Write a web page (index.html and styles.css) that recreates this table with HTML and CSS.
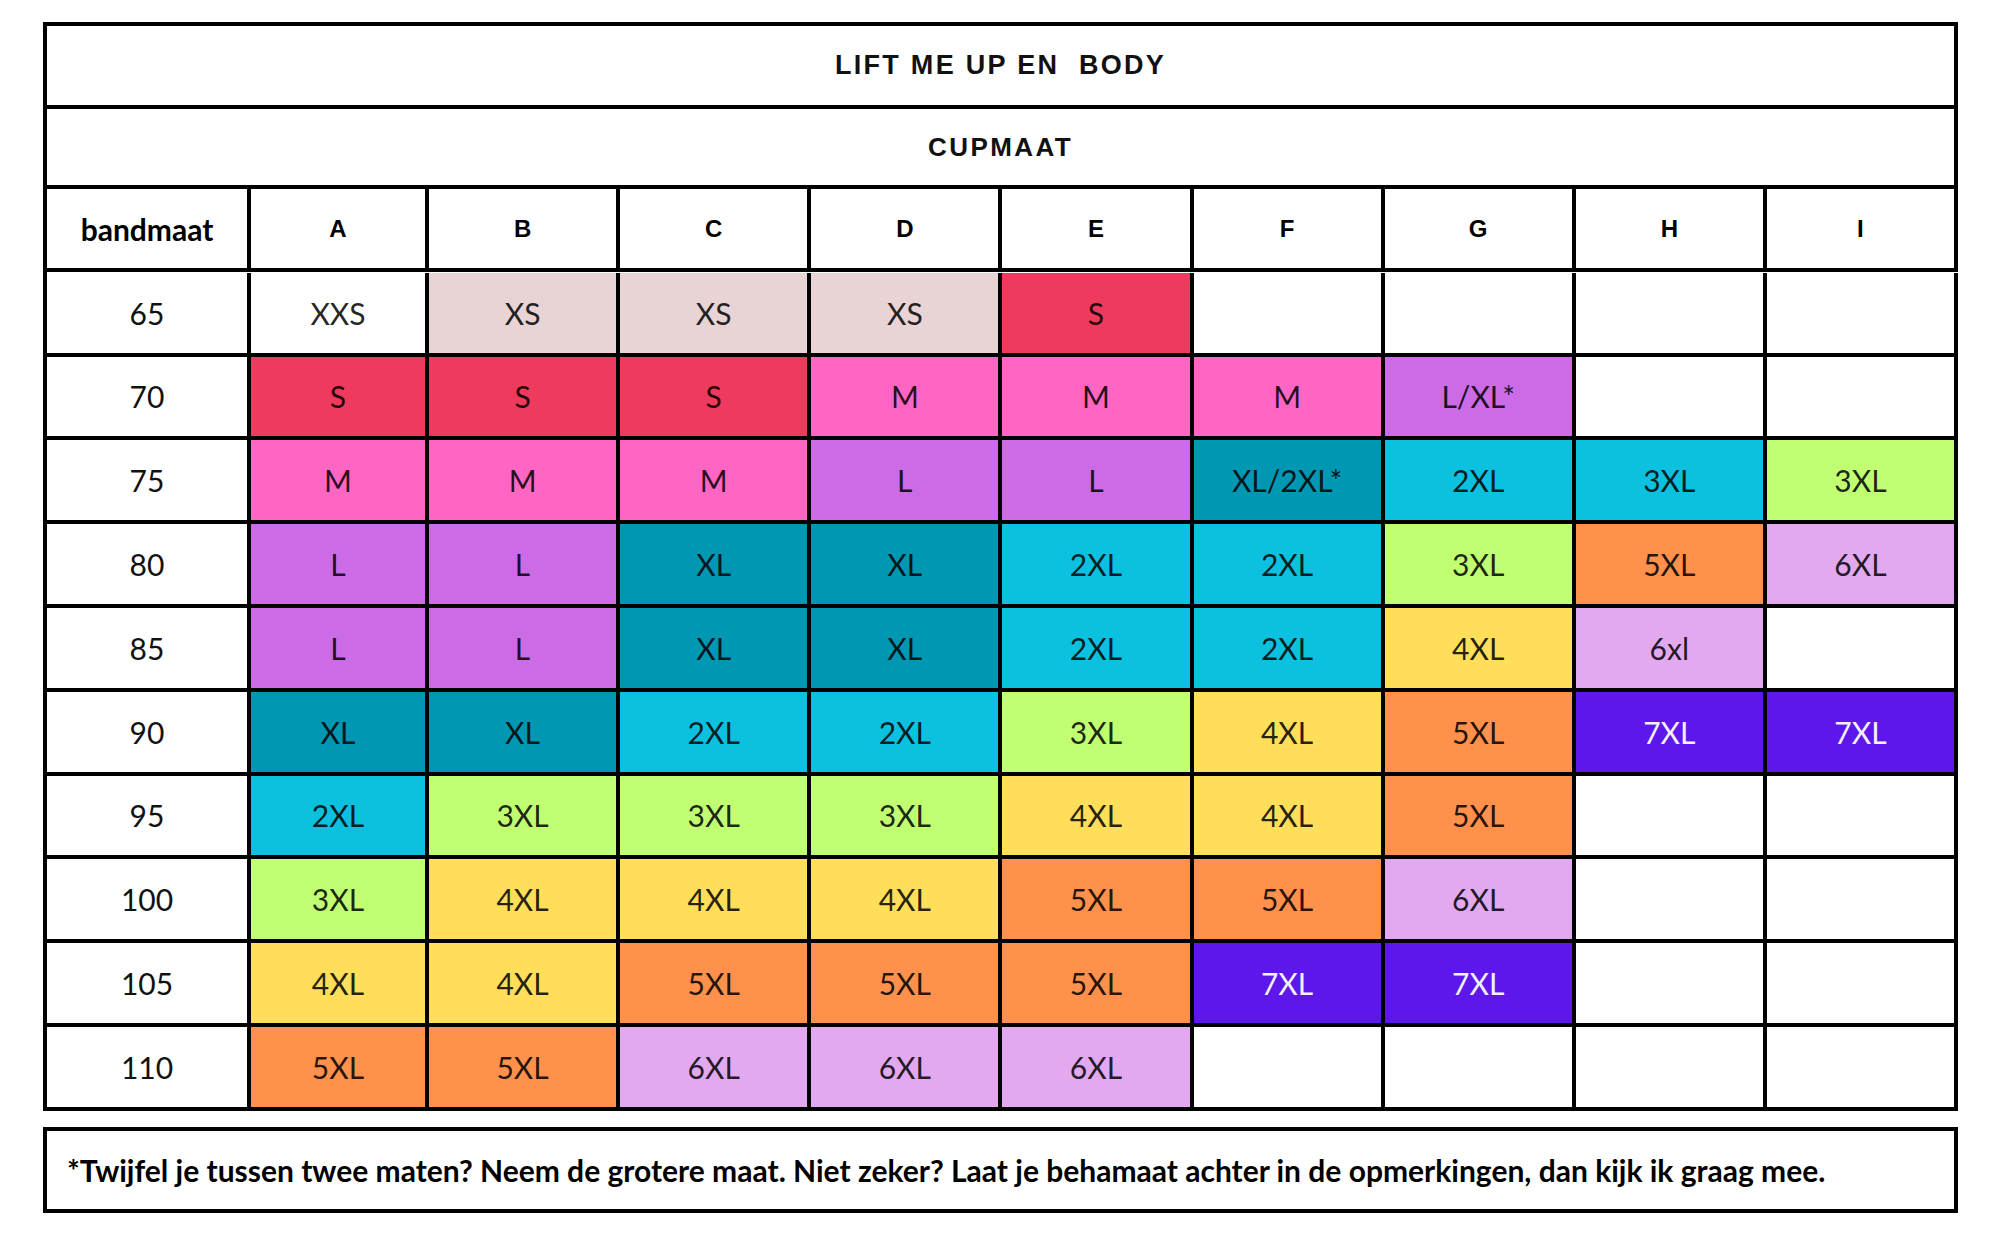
FILE: index.html
```html
<!DOCTYPE html>
<html lang="nl">
<head>
<meta charset="utf-8">
<title>Lift me up en body - maattabel</title>
<link rel="stylesheet" href="styles.css">
</head>
<body>
<div class="page">
  <div class="chart">
    <div class="banner title">LIFT ME UP EN&nbsp; BODY</div>
    <div class="banner sub">CUPMAAT</div>
    <div class="grid">
      <div class="cell head band">bandmaat</div>
      <div class="cell head">A</div><div class="cell head">B</div><div class="cell head">C</div><div class="cell head">D</div><div class="cell head">E</div><div class="cell head">F</div><div class="cell head">G</div><div class="cell head">H</div><div class="cell head">I</div>

      <div class="cell num">65</div>
      <div class="cell">XXS</div><div class="cell xs">XS</div><div class="cell xs">XS</div><div class="cell xs">XS</div><div class="cell s">S</div><div class="cell"></div><div class="cell"></div><div class="cell"></div><div class="cell"></div>

      <div class="cell num">70</div>
      <div class="cell s">S</div><div class="cell s">S</div><div class="cell s">S</div><div class="cell m">M</div><div class="cell m">M</div><div class="cell m">M</div><div class="cell l">L/XL*</div><div class="cell"></div><div class="cell"></div>

      <div class="cell num">75</div>
      <div class="cell m">M</div><div class="cell m">M</div><div class="cell m">M</div><div class="cell l">L</div><div class="cell l">L</div><div class="cell xl">XL/2XL*</div><div class="cell x2">2XL</div><div class="cell x2">3XL</div><div class="cell x3">3XL</div>

      <div class="cell num">80</div>
      <div class="cell l">L</div><div class="cell l">L</div><div class="cell xl">XL</div><div class="cell xl">XL</div><div class="cell x2">2XL</div><div class="cell x2">2XL</div><div class="cell x3">3XL</div><div class="cell x5">5XL</div><div class="cell x6">6XL</div>

      <div class="cell num">85</div>
      <div class="cell l">L</div><div class="cell l">L</div><div class="cell xl">XL</div><div class="cell xl">XL</div><div class="cell x2">2XL</div><div class="cell x2">2XL</div><div class="cell x4">4XL</div><div class="cell x6">6xl</div><div class="cell"></div>

      <div class="cell num">90</div>
      <div class="cell xl">XL</div><div class="cell xl">XL</div><div class="cell x2">2XL</div><div class="cell x2">2XL</div><div class="cell x3">3XL</div><div class="cell x4">4XL</div><div class="cell x5">5XL</div><div class="cell x7">7XL</div><div class="cell x7">7XL</div>

      <div class="cell num">95</div>
      <div class="cell x2">2XL</div><div class="cell x3">3XL</div><div class="cell x3">3XL</div><div class="cell x3">3XL</div><div class="cell x4">4XL</div><div class="cell x4">4XL</div><div class="cell x5">5XL</div><div class="cell"></div><div class="cell"></div>

      <div class="cell num">100</div>
      <div class="cell x3">3XL</div><div class="cell x4">4XL</div><div class="cell x4">4XL</div><div class="cell x4">4XL</div><div class="cell x5">5XL</div><div class="cell x5">5XL</div><div class="cell x6">6XL</div><div class="cell"></div><div class="cell"></div>

      <div class="cell num">105</div>
      <div class="cell x4">4XL</div><div class="cell x4">4XL</div><div class="cell x5">5XL</div><div class="cell x5">5XL</div><div class="cell x5">5XL</div><div class="cell x7">7XL</div><div class="cell x7">7XL</div><div class="cell"></div><div class="cell"></div>

      <div class="cell num">110</div>
      <div class="cell x5">5XL</div><div class="cell x5">5XL</div><div class="cell x6">6XL</div><div class="cell x6">6XL</div><div class="cell x6">6XL</div><div class="cell"></div><div class="cell"></div><div class="cell"></div><div class="cell"></div>
    </div>
  </div>
  <div class="note">*Twijfel je tussen twee maten? Neem de grotere maat. Niet zeker? Laat je behamaat achter in de opmerkingen, dan kijk ik graag mee.</div>
</div>
</body>
</html>
```

FILE: styles.css
```css
html, body {
  margin: 0;
  padding: 0;
  background: #ffffff;
}

body {
  font-family: "Lato", "Liberation Sans", sans-serif;
  color: #000;
}

.page {
  padding: 22px 0 0 43px;
}

.chart {
  width: 1915px;
  box-sizing: border-box;
  border-top: 4px solid #000;
  border-left: 4px solid #000;
}

.banner {
  display: flex;
  align-items: center;
  justify-content: center;
  border-right: 4px solid #000;
  border-bottom: 4px solid #000;
  font-family: "Liberation Sans", Arial, sans-serif;
  font-weight: 700;
  color: #111;
}

.title {
  height: 79px;
  font-size: 27px;
  letter-spacing: 2.3px;
}

.sub {
  height: 76px;
  font-size: 26px;
  letter-spacing: 2.4px;
}

.grid {
  display: grid;
  grid-template-columns: 204px 178px repeat(8, 1fr);
  grid-auto-rows: 83.8px;
}

.grid .cell:nth-child(-n+10) {
  height: 83px;
}

.cell {
  box-sizing: border-box;
  display: flex;
  align-items: center;
  justify-content: center;
  border-right: 4px solid #000;
  border-bottom: 4px solid #000;
  font-size: 30px;
  font-weight: 400;
  color: rgba(0, 0, 0, 0.86);
}

.head {
  font-family: "Liberation Sans", Arial, sans-serif;
  font-weight: 700;
  font-size: 24px;
  color: #000;
}

.head.band {
  font-family: "Lato", sans-serif;
  font-size: 30px;
}

.num {
  color: #111;
}

.xs { background: #e8d3d5; }
.s  { background: #ee3a5d; }
.m  { background: #ff66c4; }
.l  { background: #cb6ce6; }
.xl { background: #0097b2; }
.x2 { background: #0cc0df; }
.x3 { background: #c1ff72; }
.x4 { background: #ffde59; }
.x5 { background: #ff914d; }
.x6 { background: #e2a9f1; }
.x7 { background: #5e17eb; color: #f4f0ff; }

.note {
  margin-top: 16px;
  width: 1915px;
  height: 86px;
  box-sizing: border-box;
  border: 4px solid #000;
  display: flex;
  align-items: center;
  padding-left: 20px;
  font-weight: 700;
  font-size: 30px;
  color: #000;
  white-space: nowrap;
}
```
